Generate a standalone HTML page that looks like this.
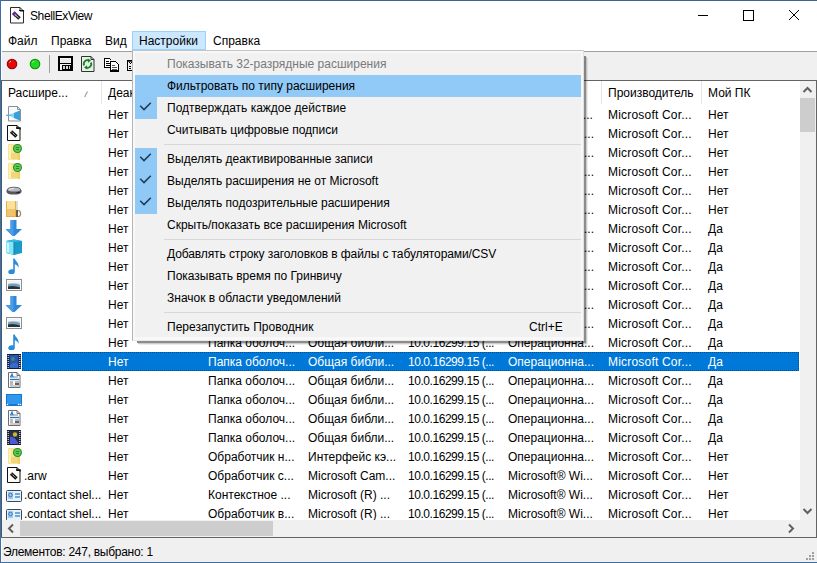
<!DOCTYPE html>
<html><head><meta charset="utf-8"><style>
*{margin:0;padding:0;box-sizing:border-box}
html,body{width:817px;height:563px;overflow:hidden;background:#fff;font-family:"Liberation Sans", sans-serif;font-size:12px;color:#000}
.a{position:absolute}
.cell,.hcell,.mtxt,.t{position:absolute;white-space:nowrap;line-height:19px;height:19px}
.digits{letter-spacing:-0.45px}
.ms{letter-spacing:0.2px}
.ic{position:absolute;left:6px;width:16px;height:16px}
.ic svg{display:block}
.selbg{position:absolute;left:22px;width:777px;height:19px;background:#0078d7}
.hcell{top:84px;line-height:19px;overflow:hidden}
.hsep{position:absolute;top:81px;width:1px;height:23px;background:#e5e5e5}
.mtxt{left:167px;line-height:22px;height:22px}
.dis{color:#7a7a7a}
.msep{position:absolute;left:164px;width:417px;height:1px;background:#d7d7d7}
.mchk{position:absolute;left:135px;width:22px;height:22px;background:#90c8f6}
</style></head><body>
<!-- window border -->
<div class="a" style="left:0;top:0;width:817px;height:1px;background:#3a6690"></div>
<div class="a" style="left:0;top:0;width:1px;height:563px;background:#3f70a4"></div>
<div class="a" style="left:1px;top:80px;width:1px;height:458px;background:#4a5868"></div>
<div class="a" style="left:0;top:562px;width:817px;height:1px;background:#3f70a4"></div>
<!-- title bar -->
<div class="a" style="left:9px;top:7px;width:16px;height:17px"><svg width="16" height="17"><path d="M1.5 0.5h9.5l3.5 3.5v12h-13z" fill="#fdfdfd" stroke="#2a2a2a"/><path d="M11 0.5v3.5h3.5" fill="none" stroke="#2a2a2a"/><path d="M10 3.5h4.5v1" fill="none" stroke="#111" stroke-width="1.2"/><path d="M4.5 6L10.5 11.5" stroke="#1a1a1a" stroke-width="3.6"/><path d="M4.2 5.7L7.4 8.6" stroke="#5a2a8a" stroke-width="3.6"/><path d="M5.8 7.4L9.6 10.8" stroke="#fff" stroke-width="0.9"/></svg></div>
<div class="t" style="left:30px;top:7px;letter-spacing:-0.4px">ShellExView</div>
<div class="a" style="left:698px;top:15px;width:10px;height:1px;background:#000"></div>
<div class="a" style="left:743px;top:10px;width:11px;height:11px;border:1px solid #000"></div>
<div class="a" style="left:788px;top:9px;width:12px;height:12px"><svg width="12" height="12"><path d="M1 1L11 11M11 1L1 11" stroke="#000" stroke-width="1"/></svg></div>
<!-- menu bar -->
<div class="a" style="left:132px;top:31px;width:74px;height:19px;background:#cce8ff;border:1px solid #99d1ff"></div>
<div class="t" style="left:8px;top:32px">Файл</div>
<div class="t" style="left:51px;top:32px">Правка</div>
<div class="t" style="left:105px;top:32px">Вид</div>
<div class="t" style="left:139px;top:32px">Настройки</div>
<div class="t" style="left:213px;top:32px">Справка</div>
<!-- toolbar -->
<div class="a" style="left:2px;top:51px;width:815px;height:1px;background:#a0a0a0"></div>
<div class="a" style="left:2px;top:52px;width:815px;height:28px;background:#f0f0f0"></div>
<div class="a" style="left:6px;top:58px;width:12px;height:12px"><svg width="12" height="12"><circle cx="6" cy="6" r="5.3" fill="#9a0000"/><circle cx="6" cy="6" r="4.3" fill="#e00c0c"/><path d="M3.6 4.6l1.2-1.6" stroke="#ffc0c0" stroke-width="1"/></svg></div>
<div class="a" style="left:29px;top:58px;width:12px;height:12px"><svg width="12" height="12"><circle cx="6" cy="6" r="5.3" fill="#0a8a0a"/><circle cx="6" cy="6" r="4.3" fill="#22d822"/><path d="M3.6 4.6l1.2-1.6" stroke="#b0ffb0" stroke-width="1"/></svg></div>
<div class="a" style="left:49px;top:55px;width:1px;height:18px;background:#a0a0a0"></div>
<div class="a" style="left:58px;top:56px;width:16px;height:16px"><svg width="16" height="16" shape-rendering="crispEdges"><path d="M0 0h15v15H0z" fill="#000"/><path d="M2 2h11v12H2z" fill="#f6f6f6"/><path d="M2 7h11v1H2z" fill="#000"/><path d="M3 3h9v4H3z" fill="#eaeaea"/><path d="M4 9h9v5H4z" fill="#000"/><path d="M5 10h2v3H5zM8 10h2v3H8zM11 10h1v3h-1z" fill="#d8d8d8"/></svg></div>
<div class="a" style="left:81px;top:56px;width:16px;height:16px"><svg width="16" height="16"><path d="M0.5 0.5h9.5l3 3v12h-12.5z" fill="#e4f4e4" stroke="#333"/><path d="M10 0.5v3h3" fill="none" stroke="#333"/><path d="M3.2 9.5A3.6 3.6 0 0 1 8 4.6" fill="none" stroke="#1e7f2a" stroke-width="1.8"/><path d="M6.8 2.6L10 4.4L7 6.8z" fill="#1e7f2a"/><path d="M9.8 6.5A3.6 3.6 0 0 1 5 11.4" fill="none" stroke="#1e7f2a" stroke-width="1.8"/><path d="M6.2 13.4L3 11.6L6 9.2z" fill="#1e7f2a"/></svg></div>
<div class="a" style="left:104px;top:58px;width:16px;height:14px"><svg width="16" height="14" shape-rendering="crispEdges"><path d="M0 0h5v1H0zM0 0h1v10H0zM0 9h6v1H0z" fill="#000"/><path d="M1 1h5v8H1z" fill="#fff"/><path d="M2 3h3v1H2zM2 5h4v1H2zM2 7h4v1H2z" fill="#000"/><path d="M5 0h1v1H5zM6 1h1v1H6z" fill="#000"/>
<path d="M6 3h6v1H6zM6 3h1v11H6zM6 12h9v2H6zM14 6h1v8h-1zM12 4h1v1h-1zM13 5h1v1h-1z" fill="#000"/><path d="M7 4h5v1h1v1h1v6H7z" fill="#fff"/><path d="M8 7h3v1H8zM8 9h5v1H8zM8 11h5v1H8z" fill="#555"/></svg></div>
<div class="a" style="left:127px;top:60px;width:6px;height:11px"><svg width="6" height="11" shape-rendering="crispEdges"><path d="M0 0h6v1H0zM0 0h1v11H0zM0 10h6v1H0z" fill="#000"/><path d="M1 1h5v1H1z" fill="#444"/><path d="M2 2h1v1H2zM4 2h1v1H4zM3 3h1v1H3zM2 6h2v1H2zM2 8h2v1H2z" fill="#000"/></svg></div>
<!-- list frame -->
<div class="a" style="left:1px;top:80px;width:816px;height:1px;background:#646464"></div>
<div class="a" style="left:816px;top:80px;width:1px;height:458px;background:#646464"></div>
<div class="a" style="left:1px;top:537px;width:816px;height:1px;background:#646464"></div>
<!-- header -->
<div class="hcell" style="left:8px;width:60px">Расшире...</div><div class="hsep" style="left:101px"></div><div class="hcell" style="left:108px;width:86px">Деактивировано</div><div class="hsep" style="left:201px"></div><div class="hcell" style="left:208px;width:86px">Тип</div><div class="hsep" style="left:301px"></div><div class="hcell" style="left:308px;width:86px">Описание</div><div class="hsep" style="left:401px"></div><div class="hcell" style="left:408px;width:86px">Версия</div><div class="hsep" style="left:501px"></div><div class="hcell" style="left:508px;width:86px">Продукт</div><div class="hsep" style="left:601px"></div><div class="hcell" style="left:608px;width:86px">Производитель</div><div class="hsep" style="left:701px"></div><div class="hcell" style="left:708px;width:86px">Мой ПК</div><div class="hsep" style="left:801px"></div>
<div class="a" style="left:83px;top:87px;width:6px;height:8px"><svg width="6" height="8"><path d="M1.5 7L4.5 1.5" stroke="#9a9a9a" stroke-width="1.1"/><path d="M1 6.5h2" stroke="#c0c0c0"/></svg></div>
<!-- rows -->
<div class="ic" style="top:106px"><svg width="16" height="16"><path d="M2.5 0.5h9l3 3v11.5h-12z" fill="#f7fafd" stroke="#8a9098"/><path d="M4 8.5L8 7L14 4.5V14.5L8 12L4 10z" fill="#8fd0f0"/><path d="M8 7L14 4.5V14.5L8 12z" fill="#3aa0d8"/><path d="M0 9.3h5" stroke="#5ab0e0" stroke-width="1.3"/><path d="M11.5 0.5v3h3" fill="none" stroke="#8a9098"/></svg></div><div class="cell" style="top:106px;left:108px;color:#000">Нет</div><div class="cell" style="top:106px;left:208px;color:#000">Папка оболоч...</div><div class="cell" style="top:106px;left:308px;color:#000">Общая библи...</div><div class="cell digits" style="top:106px;left:408px;color:#000">10.0.16299.15 (...</div><div class="cell" style="top:106px;left:508px;color:#000">Microsoft® Wi...</div><div class="cell ms" style="top:106px;left:608px;color:#000">Microsoft Cor...</div><div class="cell" style="top:106px;left:708px;color:#000">Нет</div><div class="ic" style="top:125px"><svg width="16" height="16"><path d="M1.5 0.5h9.5l3 3v12h-12.5z" fill="#fdfdf8" stroke="#111"/><path d="M11 0.5v3h3" fill="none" stroke="#111"/><path d="M10 3h4v1.5" fill="none" stroke="#111" stroke-width="1.5"/><path d="M5 6.5L10.5 11.5" stroke="#111" stroke-width="3.4"/><path d="M5.5 6.8L10 11" stroke="#fff" stroke-width="1" stroke-dasharray="1.2 0.8"/></svg></div><div class="cell" style="top:125px;left:108px;color:#000">Нет</div><div class="cell" style="top:125px;left:208px;color:#000">Папка оболоч...</div><div class="cell" style="top:125px;left:308px;color:#000">Общая библи...</div><div class="cell digits" style="top:125px;left:408px;color:#000">10.0.16299.15 (...</div><div class="cell" style="top:125px;left:508px;color:#000">Операционна...</div><div class="cell ms" style="top:125px;left:608px;color:#000">Microsoft Cor...</div><div class="cell" style="top:125px;left:708px;color:#000">Нет</div><div class="ic" style="top:144px"><svg width="16" height="16"><path d="M2 0h12v16H2z" fill="#f2cf5e"/><path d="M2 0h10v16H2z" fill="#fbe492"/><path d="M3 1h2v14H3z" fill="#fff0b8"/><path d="M5 10h7M5 12h7M5 14h7" stroke="#e8c86a"/><circle cx="11.5" cy="4.5" r="4.5" fill="#2a8a2a"/><circle cx="11.5" cy="4.5" r="3.4" fill="#5ccc50"/><path d="M9.8 3.5h3.4M9.8 5.5h3.4" stroke="#2a7a2a" stroke-width="0.9"/></svg></div><div class="cell" style="top:144px;left:108px;color:#000">Нет</div><div class="cell" style="top:144px;left:208px;color:#000">Папка оболоч...</div><div class="cell" style="top:144px;left:308px;color:#000">Общая библи...</div><div class="cell digits" style="top:144px;left:408px;color:#000">10.0.16299.15 (...</div><div class="cell" style="top:144px;left:508px;color:#000">Операционна...</div><div class="cell ms" style="top:144px;left:608px;color:#000">Microsoft Cor...</div><div class="cell" style="top:144px;left:708px;color:#000">Нет</div><div class="ic" style="top:163px"><svg width="16" height="16"><path d="M2 0h12v16H2z" fill="#f2cf5e"/><path d="M2 0h10v16H2z" fill="#fbe492"/><path d="M3 1h2v14H3z" fill="#fff0b8"/><path d="M5 10h7M5 12h7M5 14h7" stroke="#e8c86a"/><circle cx="11.5" cy="4.5" r="4.5" fill="#2a8a2a"/><circle cx="11.5" cy="4.5" r="3.4" fill="#5ccc50"/><path d="M9.8 3.5h3.4M9.8 5.5h3.4" stroke="#2a7a2a" stroke-width="0.9"/></svg></div><div class="cell" style="top:163px;left:108px;color:#000">Нет</div><div class="cell" style="top:163px;left:208px;color:#000">Папка оболоч...</div><div class="cell" style="top:163px;left:308px;color:#000">Общая библи...</div><div class="cell digits" style="top:163px;left:408px;color:#000">10.0.16299.15 (...</div><div class="cell" style="top:163px;left:508px;color:#000">Операционна...</div><div class="cell ms" style="top:163px;left:608px;color:#000">Microsoft Cor...</div><div class="cell" style="top:163px;left:708px;color:#000">Нет</div><div class="ic" style="top:182px"><svg width="16" height="16"><path d="M0.5 8.5Q1 5 8 4.8Q15 5 15.5 8.5V10Q15 12.5 8 12.6Q1 12.5 0.5 10z" fill="#56565e"/><path d="M1.5 8Q2 5.8 8 5.6Q14 5.8 14.5 8Q13 9.6 8 9.6Q3 9.6 1.5 8z" fill="#b8b8c0"/><path d="M3 7.5Q5 6.5 8 6.6" stroke="#f0f0f0" fill="none"/><path d="M10.5 10.5h3" stroke="#222"/></svg></div><div class="cell" style="top:182px;left:108px;color:#000">Нет</div><div class="cell" style="top:182px;left:208px;color:#000">Папка оболоч...</div><div class="cell" style="top:182px;left:308px;color:#000">Общая библи...</div><div class="cell digits" style="top:182px;left:408px;color:#000">10.0.16299.15 (...</div><div class="cell" style="top:182px;left:508px;color:#000">Операционна...</div><div class="cell ms" style="top:182px;left:608px;color:#000">Microsoft Cor...</div><div class="cell" style="top:182px;left:708px;color:#000">Нет</div><div class="ic" style="top:201px"><svg width="16" height="16"><path d="M0 0h10v16H0z" fill="#e4b04e"/><path d="M1 0h8v8H1z" fill="#f8e29a"/><path d="M1 8h8v7H1z" fill="#eec46c"/><path d="M10 0h2v16h-2z" fill="#dcdcd0"/><path d="M10 9h2v7h-2z" fill="#6a6040"/><path d="M12 9.5a2.6 3.2 0 0 1 0 6.4" fill="none" stroke="#9a8a5a" stroke-width="1.2"/></svg></div><div class="cell" style="top:201px;left:108px;color:#000">Нет</div><div class="cell" style="top:201px;left:208px;color:#000">Папка оболоч...</div><div class="cell" style="top:201px;left:308px;color:#000">Общая библи...</div><div class="cell digits" style="top:201px;left:408px;color:#000">10.0.16299.15 (...</div><div class="cell" style="top:201px;left:508px;color:#000">Операционна...</div><div class="cell ms" style="top:201px;left:608px;color:#000">Microsoft Cor...</div><div class="cell" style="top:201px;left:708px;color:#000">Нет</div><div class="ic" style="top:220px"><svg width="16" height="16"><path d="M4.5 0h6v9h5.5L7.5 17L-0.5 9h5z" fill="#2f86da"/><path d="M4.5 0h3v16.5L-0.5 9h5z" fill="#4a9ce6"/></svg></div><div class="cell" style="top:220px;left:108px;color:#000">Нет</div><div class="cell" style="top:220px;left:208px;color:#000">Папка оболоч...</div><div class="cell" style="top:220px;left:308px;color:#000">Общая библи...</div><div class="cell digits" style="top:220px;left:408px;color:#000">10.0.16299.15 (...</div><div class="cell" style="top:220px;left:508px;color:#000">Операционна...</div><div class="cell ms" style="top:220px;left:608px;color:#000">Microsoft Cor...</div><div class="cell" style="top:220px;left:708px;color:#000">Да</div><div class="ic" style="top:239px"><svg width="16" height="16"><path d="M0 2L8 0.5L16 2V14L8 16L0 14z" fill="#1a9ccb"/><path d="M0 2L8 3V16L0 14z" fill="#86e6f4"/><path d="M0 2L8 0.5L16 2L8 3z" fill="#3ab8e0"/><path d="M2 4v9" stroke="#c8f6fc" stroke-width="2"/><path d="M8 3v13" stroke="#0d7ea8"/></svg></div><div class="cell" style="top:239px;left:108px;color:#000">Нет</div><div class="cell" style="top:239px;left:208px;color:#000">Папка оболоч...</div><div class="cell" style="top:239px;left:308px;color:#000">Общая библи...</div><div class="cell digits" style="top:239px;left:408px;color:#000">10.0.16299.15 (...</div><div class="cell" style="top:239px;left:508px;color:#000">Операционна...</div><div class="cell ms" style="top:239px;left:608px;color:#000">Microsoft Cor...</div><div class="cell" style="top:239px;left:708px;color:#000">Да</div><div class="ic" style="top:258px"><svg width="16" height="16"><path d="M7.2 0.5h1.6c0.4 2.6 4.8 4.4 3.6 9.4c-0.4-1.8-1.8-3.2-3.6-3.6v7.4c0 1.8-1.6 2.8-3.4 2.8c-1.9 0-3.2-1-3.2-2.4c0-1.7 1.8-2.9 3.6-2.9c0.5 0 1 0.1 1.4 0.3z" fill="#2b8cdc"/></svg></div><div class="cell" style="top:258px;left:108px;color:#000">Нет</div><div class="cell" style="top:258px;left:208px;color:#000">Папка оболоч...</div><div class="cell" style="top:258px;left:308px;color:#000">Общая библи...</div><div class="cell digits" style="top:258px;left:408px;color:#000">10.0.16299.15 (...</div><div class="cell" style="top:258px;left:508px;color:#000">Операционна...</div><div class="cell ms" style="top:258px;left:608px;color:#000">Microsoft Cor...</div><div class="cell" style="top:258px;left:708px;color:#000">Да</div><div class="ic" style="top:277px"><svg width="16" height="16"><rect x="0.5" y="2.5" width="15" height="11" fill="#fbfbfb" stroke="#8f8f8f"/><rect x="2" y="4" width="12" height="8" fill="#cfe4f2"/><path d="M2 7.5Q7 5.5 14 8V12H2z" fill="#7e9cb0"/><path d="M2 9.5Q8 8 14 10.5V12H2z" fill="#24343e"/><path d="M2 4h12v2H2z" fill="#eef6fb"/></svg></div><div class="cell" style="top:277px;left:108px;color:#000">Нет</div><div class="cell" style="top:277px;left:208px;color:#000">Папка оболоч...</div><div class="cell" style="top:277px;left:308px;color:#000">Общая библи...</div><div class="cell digits" style="top:277px;left:408px;color:#000">10.0.16299.15 (...</div><div class="cell" style="top:277px;left:508px;color:#000">Операционна...</div><div class="cell ms" style="top:277px;left:608px;color:#000">Microsoft Cor...</div><div class="cell" style="top:277px;left:708px;color:#000">Да</div><div class="ic" style="top:296px"><svg width="16" height="16"><path d="M4.5 0h6v9h5.5L7.5 17L-0.5 9h5z" fill="#2f86da"/><path d="M4.5 0h3v16.5L-0.5 9h5z" fill="#4a9ce6"/></svg></div><div class="cell" style="top:296px;left:108px;color:#000">Нет</div><div class="cell" style="top:296px;left:208px;color:#000">Папка оболоч...</div><div class="cell" style="top:296px;left:308px;color:#000">Общая библи...</div><div class="cell digits" style="top:296px;left:408px;color:#000">10.0.16299.15 (...</div><div class="cell" style="top:296px;left:508px;color:#000">Операционна...</div><div class="cell ms" style="top:296px;left:608px;color:#000">Microsoft Cor...</div><div class="cell" style="top:296px;left:708px;color:#000">Да</div><div class="ic" style="top:315px"><svg width="16" height="16"><rect x="0.5" y="2.5" width="15" height="11" fill="#fbfbfb" stroke="#8f8f8f"/><rect x="2" y="4" width="12" height="8" fill="#cfe4f2"/><path d="M2 7.5Q7 5.5 14 8V12H2z" fill="#7e9cb0"/><path d="M2 9.5Q8 8 14 10.5V12H2z" fill="#24343e"/><path d="M2 4h12v2H2z" fill="#eef6fb"/></svg></div><div class="cell" style="top:315px;left:108px;color:#000">Нет</div><div class="cell" style="top:315px;left:208px;color:#000">Папка оболоч...</div><div class="cell" style="top:315px;left:308px;color:#000">Общая библи...</div><div class="cell digits" style="top:315px;left:408px;color:#000">10.0.16299.15 (...</div><div class="cell" style="top:315px;left:508px;color:#000">Операционна...</div><div class="cell ms" style="top:315px;left:608px;color:#000">Microsoft Cor...</div><div class="cell" style="top:315px;left:708px;color:#000">Да</div><div class="ic" style="top:334px"><svg width="16" height="16"><path d="M7.2 0.5h1.6c0.4 2.6 4.8 4.4 3.6 9.4c-0.4-1.8-1.8-3.2-3.6-3.6v7.4c0 1.8-1.6 2.8-3.4 2.8c-1.9 0-3.2-1-3.2-2.4c0-1.7 1.8-2.9 3.6-2.9c0.5 0 1 0.1 1.4 0.3z" fill="#2b8cdc"/></svg></div><div class="cell" style="top:334px;left:108px;color:#000">Нет</div><div class="cell" style="top:334px;left:208px;color:#000">Папка оболоч...</div><div class="cell" style="top:334px;left:308px;color:#000">Общая библи...</div><div class="cell digits" style="top:334px;left:408px;color:#000">10.0.16299.15 (...</div><div class="cell" style="top:334px;left:508px;color:#000">Операционна...</div><div class="cell ms" style="top:334px;left:608px;color:#000">Microsoft Cor...</div><div class="cell" style="top:334px;left:708px;color:#000">Да</div><div class="selbg" style="top:352px"></div><div class="ic" style="top:353px"><svg width="16" height="16"><rect x="1" y="1" width="14" height="15" fill="#0d1f4a"/><rect x="3.5" y="2" width="9" height="13" fill="#2a56a8"/><circle cx="7" cy="6" r="2" fill="#3a8a8a"/><path d="M4 12Q8 8 12 11V15H4z" fill="#3a6ac8"/><path d="M2.2 2v13M13.8 2v13" stroke="#e8f0ff" stroke-width="1.1" stroke-dasharray="1 1"/></svg></div><div class="cell" style="top:353px;left:108px;color:#fff">Нет</div><div class="cell" style="top:353px;left:208px;color:#fff">Папка оболоч...</div><div class="cell" style="top:353px;left:308px;color:#fff">Общая библи...</div><div class="cell digits" style="top:353px;left:408px;color:#fff">10.0.16299.15 (...</div><div class="cell" style="top:353px;left:508px;color:#fff">Операционна...</div><div class="cell ms" style="top:353px;left:608px;color:#fff">Microsoft Cor...</div><div class="cell" style="top:353px;left:708px;color:#fff">Да</div><div class="ic" style="top:372px"><svg width="16" height="16"><path d="M2.5 0.5h8.5l3 3v12h-11.5z" fill="#fdfdfd" stroke="#6a6e74"/><path d="M11 0.5v3h3" fill="none" stroke="#6a6e74"/><path d="M4.5 5L6 2L7 5M4 5h4" fill="none" stroke="#2e78c8" stroke-width="1.1"/><path d="M8 5h4" stroke="#888"/><path d="M4 7.5h9" stroke="#2e70b8" stroke-width="1.3"/><path d="M4 10h3M9 10h4M4 12h3" stroke="#777"/><path d="M9 12h4" stroke="#222" stroke-width="1.4"/><path d="M4 14h9" stroke="#999"/></svg></div><div class="cell" style="top:372px;left:108px;color:#000">Нет</div><div class="cell" style="top:372px;left:208px;color:#000">Папка оболоч...</div><div class="cell" style="top:372px;left:308px;color:#000">Общая библи...</div><div class="cell digits" style="top:372px;left:408px;color:#000">10.0.16299.15 (...</div><div class="cell" style="top:372px;left:508px;color:#000">Операционна...</div><div class="cell ms" style="top:372px;left:608px;color:#000">Microsoft Cor...</div><div class="cell" style="top:372px;left:708px;color:#000">Да</div><div class="ic" style="top:391px"><svg width="16" height="16"><rect x="0" y="3" width="16" height="12" fill="#1478d0"/><rect x="1" y="4" width="14" height="9" fill="#2f98ec"/><circle cx="1.5" cy="13.5" r="0.8" fill="#fff"/><circle cx="12.5" cy="13.5" r="0.8" fill="#fff"/><circle cx="14.5" cy="13.5" r="0.8" fill="#fff"/></svg></div><div class="cell" style="top:391px;left:108px;color:#000">Нет</div><div class="cell" style="top:391px;left:208px;color:#000">Папка оболоч...</div><div class="cell" style="top:391px;left:308px;color:#000">Общая библи...</div><div class="cell digits" style="top:391px;left:408px;color:#000">10.0.16299.15 (...</div><div class="cell" style="top:391px;left:508px;color:#000">Операционна...</div><div class="cell ms" style="top:391px;left:608px;color:#000">Microsoft Cor...</div><div class="cell" style="top:391px;left:708px;color:#000">Да</div><div class="ic" style="top:410px"><svg width="16" height="16"><path d="M2.5 0.5h8.5l3 3v12h-11.5z" fill="#fdfdfd" stroke="#6a6e74"/><path d="M11 0.5v3h3" fill="none" stroke="#6a6e74"/><path d="M4.5 5L6 2L7 5M4 5h4" fill="none" stroke="#2e78c8" stroke-width="1.1"/><path d="M8 5h4" stroke="#888"/><path d="M4 7.5h9" stroke="#2e70b8" stroke-width="1.3"/><path d="M4 10h3M9 10h4M4 12h3" stroke="#777"/><path d="M9 12h4" stroke="#222" stroke-width="1.4"/><path d="M4 14h9" stroke="#999"/></svg></div><div class="cell" style="top:410px;left:108px;color:#000">Нет</div><div class="cell" style="top:410px;left:208px;color:#000">Папка оболоч...</div><div class="cell" style="top:410px;left:308px;color:#000">Общая библи...</div><div class="cell digits" style="top:410px;left:408px;color:#000">10.0.16299.15 (...</div><div class="cell" style="top:410px;left:508px;color:#000">Операционна...</div><div class="cell ms" style="top:410px;left:608px;color:#000">Microsoft Cor...</div><div class="cell" style="top:410px;left:708px;color:#000">Да</div><div class="ic" style="top:429px"><svg width="16" height="16"><rect x="1" y="1" width="14" height="15" fill="#1a1f30"/><rect x="3.5" y="2" width="9" height="13" fill="#2a3050"/><circle cx="9" cy="5.5" r="2.2" fill="#c8b830"/><path d="M4 8Q7 7 12 12V15H4z" fill="#4a5ad8"/><path d="M9 8l3 5" stroke="#202020"/><path d="M2.2 2v13M13.8 2v13" stroke="#f0f0f0" stroke-width="1.1" stroke-dasharray="1 1"/></svg></div><div class="cell" style="top:429px;left:108px;color:#000">Нет</div><div class="cell" style="top:429px;left:208px;color:#000">Папка оболоч...</div><div class="cell" style="top:429px;left:308px;color:#000">Общая библи...</div><div class="cell digits" style="top:429px;left:408px;color:#000">10.0.16299.15 (...</div><div class="cell" style="top:429px;left:508px;color:#000">Операционна...</div><div class="cell ms" style="top:429px;left:608px;color:#000">Microsoft Cor...</div><div class="cell" style="top:429px;left:708px;color:#000">Да</div><div class="ic" style="top:448px"><svg width="16" height="16"><path d="M2 0h12v16H2z" fill="#f2cf5e"/><path d="M2 0h10v16H2z" fill="#fbe492"/><path d="M3 1h2v14H3z" fill="#fff0b8"/><path d="M5 10h7M5 12h7M5 14h7" stroke="#e8c86a"/><circle cx="11.5" cy="4.5" r="4.5" fill="#2a8a2a"/><circle cx="11.5" cy="4.5" r="3.4" fill="#5ccc50"/><path d="M9.8 3.5h3.4M9.8 5.5h3.4" stroke="#2a7a2a" stroke-width="0.9"/></svg></div><div class="cell" style="top:448px;left:108px;color:#000">Нет</div><div class="cell" style="top:448px;left:208px;color:#000">Обработчик н...</div><div class="cell" style="top:448px;left:308px;color:#000">Интерфейс кэ...</div><div class="cell digits" style="top:448px;left:408px;color:#000">10.0.16299.15 (...</div><div class="cell" style="top:448px;left:508px;color:#000">Операционна...</div><div class="cell ms" style="top:448px;left:608px;color:#000">Microsoft Cor...</div><div class="cell" style="top:448px;left:708px;color:#000">Нет</div><div class="ic" style="top:467px"><svg width="16" height="16"><path d="M1.5 0.5h9.5l3 3v12h-12.5z" fill="#fdfdf8" stroke="#111"/><path d="M11 0.5v3h3" fill="none" stroke="#111"/><path d="M10 3h4v1.5" fill="none" stroke="#111" stroke-width="1.5"/><path d="M5 6.5L10.5 11.5" stroke="#111" stroke-width="3.4"/><path d="M5.5 6.8L10 11" stroke="#fff" stroke-width="1" stroke-dasharray="1.2 0.8"/></svg></div><div class="cell" style="top:467px;left:24px;color:#000">.arw</div><div class="cell" style="top:467px;left:108px;color:#000">Нет</div><div class="cell" style="top:467px;left:208px;color:#000">Обработчик с...</div><div class="cell" style="top:467px;left:308px;color:#000">Microsoft Cam...</div><div class="cell digits" style="top:467px;left:408px;color:#000">10.0.16299.15 (...</div><div class="cell" style="top:467px;left:508px;color:#000">Microsoft® Wi...</div><div class="cell ms" style="top:467px;left:608px;color:#000">Microsoft Cor...</div><div class="cell" style="top:467px;left:708px;color:#000">Нет</div><div class="ic" style="top:486px"><svg width="16" height="16"><rect x="0.5" y="4.5" width="15" height="11" rx="1" fill="#e6f2fb" stroke="#3a4650"/><rect x="2" y="6" width="5" height="7" fill="#9ccaf0"/><circle cx="4.5" cy="9" r="1.8" fill="none" stroke="#3a7ac0"/><path d="M9 8h5M9 11h5" stroke="#4a8ed0" stroke-width="1.3"/></svg></div><div class="cell" style="top:486px;left:24px;color:#000">.contact shel...</div><div class="cell" style="top:486px;left:108px;color:#000">Нет</div><div class="cell" style="top:486px;left:208px;color:#000">Контекстное ...</div><div class="cell" style="top:486px;left:308px;color:#000">Microsoft (R) ...</div><div class="cell digits" style="top:486px;left:408px;color:#000">10.0.16299.15 (...</div><div class="cell" style="top:486px;left:508px;color:#000">Microsoft® Wi...</div><div class="cell ms" style="top:486px;left:608px;color:#000">Microsoft Cor...</div><div class="cell" style="top:486px;left:708px;color:#000">Нет</div><div class="ic" style="top:505px"><svg width="16" height="16"><rect x="0.5" y="4.5" width="15" height="11" rx="1" fill="#e6f2fb" stroke="#3a4650"/><rect x="2" y="6" width="5" height="7" fill="#9ccaf0"/><circle cx="4.5" cy="9" r="1.8" fill="none" stroke="#3a7ac0"/><path d="M9 8h5M9 11h5" stroke="#4a8ed0" stroke-width="1.3"/></svg></div><div class="cell" style="top:505px;left:24px;color:#000">.contact shel...</div><div class="cell" style="top:505px;left:108px;color:#000">Нет</div><div class="cell" style="top:505px;left:208px;color:#000">Обработчик в...</div><div class="cell" style="top:505px;left:308px;color:#000">Microsoft (R) ...</div><div class="cell digits" style="top:505px;left:408px;color:#000">10.0.16299.15 (...</div><div class="cell" style="top:505px;left:508px;color:#000">Microsoft® Wi...</div><div class="cell ms" style="top:505px;left:608px;color:#000">Microsoft Cor...</div><div class="cell" style="top:505px;left:708px;color:#000">Нет</div>
<!-- focus rect dots on selection -->
<div class="a" style="left:22px;top:352px;width:777px;height:19px;border:1px dotted #07305a;opacity:.55"></div>
<!-- vertical scrollbar -->
<div class="a" style="left:800px;top:81px;width:16px;height:439px;background:#f0f0f0"></div>
<div class="a" style="left:800px;top:98px;width:15px;height:34px;background:#cdcdcd"></div>
<div class="a" style="left:800px;top:81px;width:16px;height:17px"><svg width="16" height="17"><path d="M3.5 11L7.5 7L11.5 11" fill="none" stroke="#606060" stroke-width="2"/></svg></div>
<div class="a" style="left:800px;top:503px;width:16px;height:17px"><svg width="16" height="17"><path d="M3.5 6L7.5 10L11.5 6" fill="none" stroke="#606060" stroke-width="2"/></svg></div>
<!-- horizontal scrollbar -->
<div class="a" style="left:2px;top:520px;width:798px;height:17px;background:#f0f0f0"></div>
<div class="a" style="left:20px;top:521px;width:253px;height:15px;background:#cdcdcd"></div>
<div class="a" style="left:2px;top:520px;width:17px;height:17px"><svg width="17" height="17"><path d="M11 4.5L7 8.5L11 12.5" fill="none" stroke="#606060" stroke-width="2"/></svg></div>
<div class="a" style="left:783px;top:520px;width:17px;height:17px"><svg width="17" height="17"><path d="M6 4.5L10 8.5L6 12.5" fill="none" stroke="#606060" stroke-width="2"/></svg></div>
<div class="a" style="left:800px;top:520px;width:16px;height:17px;background:#f0f0f0"></div>
<!-- status bar -->
<div class="a" style="left:2px;top:538px;width:815px;height:24px;background:#f0f0f0"></div>
<div class="t" style="left:3px;top:543px;letter-spacing:-0.28px">Элементов: 247, выбрано: 1</div>
<div class="a" style="left:803px;top:550px;width:12px;height:12px"><svg width="12" height="12"><path d="M9 2h2v2H9zM6 5h2v2H6zM9 5h2v2H9zM3 8h2v2H3zM6 8h2v2H6zM9 8h2v2H9z" fill="#a0a0a0"/></svg></div>
<!-- dropdown menu -->
<div class="a" style="left:584px;top:56px;width:2px;height:287px;background:rgba(0,0,0,.45)"></div>
<div class="a" style="left:586px;top:57px;width:1px;height:287px;background:rgba(0,0,0,.2)"></div>
<div class="a" style="left:587px;top:58px;width:1px;height:286px;background:rgba(0,0,0,.07)"></div>
<div class="a" style="left:137px;top:341px;width:447px;height:2px;background:rgba(0,0,0,.45)"></div>
<div class="a" style="left:138px;top:343px;width:448px;height:1px;background:rgba(0,0,0,.2)"></div>
<div class="a" style="left:139px;top:344px;width:448px;height:1px;background:rgba(0,0,0,.07)"></div>
<div class="a" style="left:132px;top:50px;width:452px;height:291px;background:#f8f8f8;border-left:1px solid #b4b4b4;border-top:1px solid #c4c4c4;border-right:1px solid #e0e0e0;border-bottom:1px solid #e8e8e8"></div>
<div class="a" style="left:135px;top:53px;width:446px;height:284px;background:#f1f1f1"></div>
<div class="a" style="left:135px;top:75px;width:446px;height:22px;background:#91c9f7"></div>
<div class="mtxt dis" style="top:53px">Показывать 32-разрядные расширения</div><div class="mtxt" style="top:75px">Фильтровать по типу расширения</div><div class="mchk" style="top:97px"><svg width="22" height="22"><path d="M5.2 8.8L9 12.6L15.8 5.8" fill="none" stroke="#1c3a58" stroke-width="1.5"/></svg></div><div class="mtxt" style="top:97px">Подтверждать каждое действие</div><div class="mtxt" style="top:119px">Считывать цифровые подписи</div><div class="msep" style="top:144px"></div><div class="mchk" style="top:148px"><svg width="22" height="22"><path d="M5.2 8.8L9 12.6L15.8 5.8" fill="none" stroke="#1c3a58" stroke-width="1.5"/></svg></div><div class="mtxt" style="top:148px">Выделять деактивированные записи</div><div class="mchk" style="top:170px"><svg width="22" height="22"><path d="M5.2 8.8L9 12.6L15.8 5.8" fill="none" stroke="#1c3a58" stroke-width="1.5"/></svg></div><div class="mtxt" style="top:170px">Выделять расширения не от Microsoft</div><div class="mchk" style="top:192px"><svg width="22" height="22"><path d="M5.2 8.8L9 12.6L15.8 5.8" fill="none" stroke="#1c3a58" stroke-width="1.5"/></svg></div><div class="mtxt" style="top:192px">Выделять подозрительные расширения</div><div class="mtxt" style="top:214px">Скрыть/показать все расширения Microsoft</div><div class="msep" style="top:239px"></div><div class="mtxt" style="top:243px;letter-spacing:-0.1px">Добавлять строку заголовков в файлы с табуляторами/CSV</div><div class="mtxt" style="top:265px">Показывать время по Гринвичу</div><div class="mtxt" style="top:287px">Значок в области уведомлений</div><div class="msep" style="top:312px"></div><div class="mtxt" style="top:316px">Перезапустить Проводник</div><div class="mtxt" style="top:316px;left:529px">Ctrl+E</div>
</body></html>
